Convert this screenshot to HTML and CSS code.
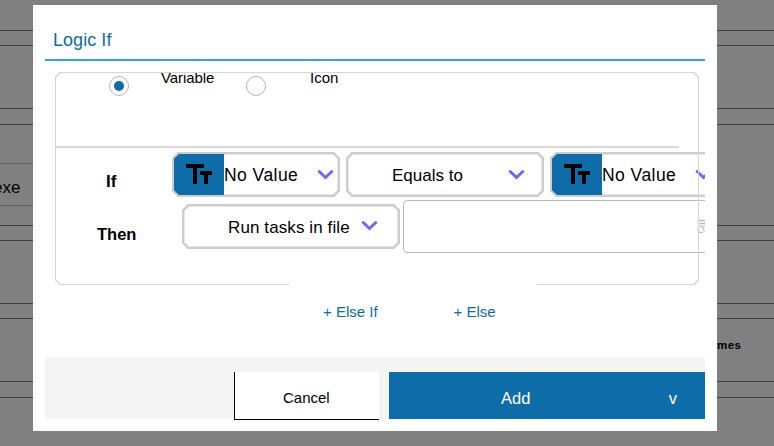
FILE: index.html
```html
<!DOCTYPE html>
<html lang="en">
<head>
<meta charset="utf-8">
<title>Logic If</title>
<link rel="stylesheet" href="styles.css">
</head>
<body>
<svg class="defs" aria-hidden="true">
  <symbol id="chevron" viewBox="0 0 17 12"><path d="M2.2 2.5 8.5 8.5 14.8 2.5" fill="none" stroke="#6a68fa" stroke-width="3" stroke-linecap="round"/></symbol>
  <symbol id="text-type" viewBox="0 0 26 21"><path d="M0 0h18v4h-7v16H7V4H0zM14 7h12v4h-4v9h-4v-9h-4z"/></symbol>
</svg>
<div class="page">
  <div class="task first"></div>
  <div class="task"></div>
  <div class="task tall"><div class="field">exe</div></div>
  <div class="task"></div>
  <div class="task named"><b>mes</b></div>
  <div class="task last"></div>
</div>
<div class="modal">
  <h1 class="title">Logic If</h1>
  <div class="content">
    <div class="panel">
      <div class="kinds">
        <span class="radio checked"></span><span class="kind variable">Variable</span>
        <span class="radio"></span><span class="kind">Icon</span>
      </div>
      <div class="row">
        <b class="label if">If</b>
        <div class="select value"><span class="type"><svg><use href="#text-type"/></svg></span><span class="caption">No Value</span><svg class="chevron"><use href="#chevron"/></svg></div>
        <div class="select operator"><span class="caption">Equals to</span><svg class="chevron"><use href="#chevron"/></svg></div>
        <div class="select value"><span class="type"><svg><use href="#text-type"/></svg></span><span class="caption">No Value</span><svg class="chevron"><use href="#chevron"/></svg></div>
      </div>
      <div class="row then-row">
        <b class="label then">Then</b>
        <div class="select action"><span class="caption">Run tasks in file</span><svg class="chevron"><use href="#chevron"/></svg></div>
        <div class="file"><svg width="16" height="14" viewBox="0 0 16 14" fill="none" stroke="#bbb"><path d="M1.5 13V1.5h12V6M1 13.5h5M3 4.5h5M3 7.5h3" stroke-width="1.5"/><circle cx="9" cy="9.5" r="3"/></svg></div>
      </div>
    </div>
    <div class="branches"><span>+ Else If</span><span>+ Else</span></div>
  </div>
  <div class="footer">
    <div class="cancel">Cancel</div>
    <div class="add"><span>Add</span><span class="more">v</span></div>
  </div>
</div>
</body>
</html>
```
FILE: styles.css
```css
* { box-sizing: border-box; }
body { margin: 0; height: 446px; overflow: hidden; background: #808080; font-family: "Liberation Sans", Arial, sans-serif; color: #000; }
.defs { position: absolute; width: 0; height: 0; }
.page { display: flex; flex-direction: column; }
.task { height: 64px; margin-bottom: 14px; border: solid #404040; border-width: 1px 0; flex: none; }
.first { height: 31px; border-top: 0; }
.first + .task { margin-bottom: 15px; }
.tall { height: 102px; padding-top: 38px; }
.field { height: 43px; width: 120px; border: solid #626262; border-width: 1px 0; font-size: 17px; line-height: 48px; margin-left: -7px; }
.named { margin-bottom: 15px; padding: 19px 0 0 717px; font-size: 11.5px; line-height: 15px; letter-spacing: .4px; }
.last { margin: 0; }

.modal { position: absolute; left: 33px; top: 5px; width: 684px; height: 426px; padding: 0 12px 12px; background: #fff; display: flex; flex-direction: column; }
.title { margin: 0; height: 56px; border-bottom: 2px solid #30a5d6; padding: 24px 0 0 8px; font-size: 18px; line-height: 22px; font-weight: 400; color: #0e6da8; letter-spacing: .05px; }
.content { height: 296px; overflow: hidden; padding: 11px 6px 0 10px; }
.panel { position: relative; height: 213px; }
.panel::after { content: ""; position: absolute; inset: 0; border: 1px solid #d6d6d6; border-radius: 5px; corner-shape: bevel; }
.kinds { display: flex; height: 76px; width: 624px; border-bottom: 2px solid #d9d9d9; padding: 4px 0 0 54px; }
.radio { width: 20px; height: 20px; border: 1px solid #b5b5b5; border-radius: 50%; flex: none; display: grid; place-items: center; }
.checked::before { content: ""; width: 10px; height: 10px; border-radius: 50%; background: #0e6da8; }
.kind { font-size: 15px; line-height: 18px; margin: -7px 0 0 44px; }
.variable { width: 53px; margin: -7px 32px 0; letter-spacing: -.1px; }
.row { display: flex; width: 800px; gap: 6px; margin-top: 4px; }
.label { font-size: 17px; line-height: 20px; flex: none; }
.if { width: 60px; margin: 20px 0 0 51px; }
.then { width: 82px; margin: 24px 0 0 42px; font-size: 16.5px; }
.then-row { gap: 3px; margin-top: 3px; height: 53px; }
.then-row .select { margin-top: 4px; }
.select { height: 45px; border: 2px solid #cdcdcd; box-shadow: inset 0 0 0 1px #e6e6e6; border-radius: 6px; corner-shape: bevel; display: flex; align-items: center; flex: none; overflow: hidden; font-size: 17px; }
.value { width: 168px; }
.operator { width: 198px; padding-left: 44px; }
.action { width: 218px; padding-left: 44px; letter-spacing: .1px; }
.caption { flex: 1; white-space: nowrap; line-height: 20px; padding-top: 2px; }
.value .caption { font-size: 17.5px; letter-spacing: .45px; padding-top: 1px; }
.chevron { width: 17px; height: 12px; margin: 0 4px 0 0; }
.operator .chevron { margin-right: 17px; }
.action .chevron { margin: -1px 20px 0 0; }
.type { width: 50px; height: 41px; background: #0e6da8; display: grid; place-items: center; flex: none; }
.type svg { width: 26px; height: 21px; }
.file { width: 360px; height: 53px; border: 1px solid #b9b9b9; border-radius: 4px; padding: 18px 0 0 293px; }
.file svg { display: block; }
.branches { position: relative; width: 248px; height: 50px; margin: -2px 0 0 234px; background: #fff; display: flex; gap: 76px; padding: 20px 0 0 34px; font-size: 15px; line-height: 18px; color: #0e6da8; white-space: nowrap; }
.footer { height: 62px; background: #f4f4f4; display: flex; gap: 10px; padding: 15px 0 0 189px; }
.cancel { width: 145px; height: 48px; flex: none; background: #fff; border: solid #000; border-width: 0 0 1px 1px; font-size: 15px; line-height: 51px; padding-left: 48px; }
.add { flex: 1; height: 47px; background: #0e6da8; color: #fff; font-size: 16.5px; line-height: 53px; padding: 0 28px 0 112px; display: flex; justify-content: space-between; }
```
